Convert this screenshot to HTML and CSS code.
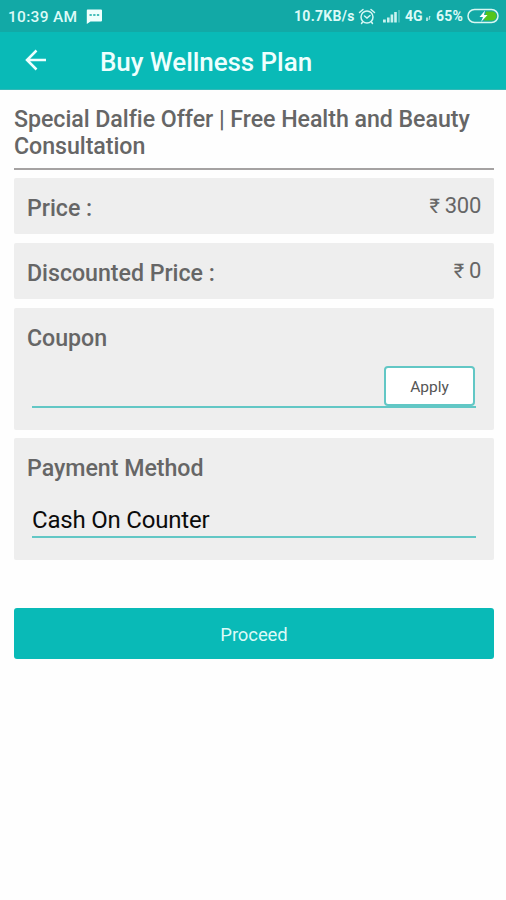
FILE: index.html
```html
<!DOCTYPE html>
<html lang="en">
<head>
<meta charset="utf-8">
<meta name="viewport" content="width=device-width">
<title>Buy Wellness Plan</title>
<link rel="stylesheet" href="styles.css">
</head>
<body>
<div class="status-bar">
  <span class="clock">10:39 AM</span>
  <svg class="message-icon" width="17" height="16" viewBox="0 0 17 16"><path d="M1.500 1.500h13.500q1 0 1 1v10q0 1-1 1H4.500L.8 16V2.500q0-1 .7-1z" fill="#effffd"/><path d="M3.500 7h2.300M7.200 7h2.300M10.900 7h2.300" stroke="#12a9a6" stroke-width="1.500"/></svg>
  <span class="speed">10.7KB/s</span>
  <svg class="alarm-icon" width="18" height="17" viewBox="0 0 18 17" fill="none" stroke="#d5f7f4" stroke-width="1.500" stroke-linecap="round"><circle cx="9" cy="9" r="6"/><path d="M6.500 8 9 10l3-2.500M1.500 4.500 5 1.500M16.500 4.500 13 1.500M4.500 14l-1 1.500M13.500 14l1 1.500"/></svg>
  <svg class="signal-icon" width="19" height="14" viewBox="0 0 19 14" fill="#c9f2ef"><path d="M1 10.500h2.800V13.500H1zM5 8.500h2.600v5H5zM8.600 5.500h2.600v8H8.600zM12.200 3h2.600v10.500h-2.600z"/><path d="M16 1h2v12.500h-2z" opacity=".3"/></svg>
  <span class="network">4G</span>
  <svg class="data-icon" width="5" height="8" viewBox="0 0 5 8"><path d="M0 3.500h2V7H0zM3 2h1.500L3.500 6H2.500z" fill="#a9e5e2"/></svg>
  <span class="battery-level">65%</span>
  <svg class="battery-icon" width="33" height="16" viewBox="0 0 33 16"><path d="M19 3.500h6a4.500 4.500 0 0 1 0 9h-8z" fill="#55c51c"/><rect x="1" y="1.500" width="30" height="13" rx="6.500" fill="none" stroke="#d9f7f2" stroke-width="1.500"/><path d="M18 2.500 12.500 9h3.500l-2 5 6.500-7H17z" fill="#fff"/></svg>
</div>
<header class="app-bar">
  <svg class="back-icon" width="22" height="22" viewBox="0 0 22 22" fill="none" stroke="#effffe" stroke-width="2.500"><path d="M21 11H2.500M11.500 1.500 2 11l9.500 9.500"/></svg>
  <h1 class="title">Buy Wellness Plan</h1>
</header>
<main class="content">
  <h2 class="offer">Special Dalfie Offer | Free Health and Beauty Consultation</h2>
  <section class="card price-row"><span class="label">Price :</span><span class="amount"><span class="rupee">₹</span> 300</span></section>
  <section class="card price-row"><span class="label">Discounted Price :</span><span class="amount"><span class="rupee">₹</span> 0</span></section>
  <section class="card field-card">
    <div class="label">Coupon</div>
    <div class="field coupon-field"><button class="apply">Apply</button></div>
  </section>
  <section class="card field-card">
    <div class="label">Payment Method</div>
    <div class="field method-field">Cash On Counter</div>
  </section>
  <button class="proceed">Proceed</button>
</main>
</body>
</html>
```
FILE: styles.css
```css
* { box-sizing: border-box; }
body {
  margin: 0;
  min-height: 900px;
  background: #fefefe;
  color: #666;
  font-family: Roboto, "Liberation Sans", sans-serif;
}
button { font-family: inherit; }
.status-bar {
  height: 32px;
  display: flex;
  align-items: center;
  padding: 0 6px 0 8px;
  background: #12a9a6;
  color: #dcfaf7;
  font-size: 14px;
  font-weight: 700;
  white-space: nowrap;
}
.clock { width: 78px; padding-top: 2px; font-size: 15.500px; font-weight: 500; letter-spacing: .3px; }
.speed { margin-left: auto; width: 64px; letter-spacing: .3px; }
.signal-icon { margin-left: 6px; }
.network { margin-left: 4px; width: 19px; }
.data-icon { margin: 4px 5px 0 2px; }
.battery-level { width: 29px; letter-spacing: .2px; }
.battery-icon { margin-left: 2px; }
.app-bar {
  height: 58px;
  display: flex;
  align-items: center;
  padding-left: 25px;
  background: #09bab7;
  border-bottom: 1px solid #35b8b7;
}
.back-icon { margin-top: -1px; }
.title { margin: 2px 0 0 53px; color: #effffe; font-size: 26px; font-weight: 500; line-height: 30px; letter-spacing: -.06px; }
.content { padding: 16px 12px 0 14px; }
.offer {
  margin: 0 0 8px;
  padding-bottom: 8px;
  border-bottom: 2px solid #a5a2a2;
  font-size: 23.200px;
  font-weight: 500;
  line-height: 27px;
  letter-spacing: -.05px;
  font-variant-ligatures: common-ligatures;
}
.card { margin-bottom: 9px; border-radius: 2px; background: #eee; }
.label { font-size: 23.200px; font-weight: 500; line-height: 28px; letter-spacing: -.03px; }
.price-row { height: 56px; display: flex; align-items: center; justify-content: space-between; padding: 3px 13px 0; }
.amount { margin-top: -4px; font-size: 22px; letter-spacing: -.3px; }
.rupee { font-size: 20px; }
.field-card { height: 122px; padding: 16px 18px 0 13px; margin-bottom: 8px; }
.field { margin-left: 5px; border-bottom: 2px solid #62c7c5; }
.coupon-field { height: 56px; display: flex; align-items: flex-end; justify-content: flex-end; padding-right: 1px; }
.apply { width: 91px; height: 40px; padding: 1px 0 0; border: 2px solid #62c7c5; border-radius: 4px; background: #fff; color: #555; font-size: 15.500px; }
.method-field { height: 56px; padding-top: 24px; color: #0b0b0b; font-size: 24px; line-height: 28px; letter-spacing: -.2px; }
.proceed { display: block; width: 100%; height: 51px; margin-top: 48px; padding-top: 3px; border: 0; border-radius: 3px; background: #09bab7; color: #dcfaf8; font-size: 18.500px; letter-spacing: -.1px; }
```
